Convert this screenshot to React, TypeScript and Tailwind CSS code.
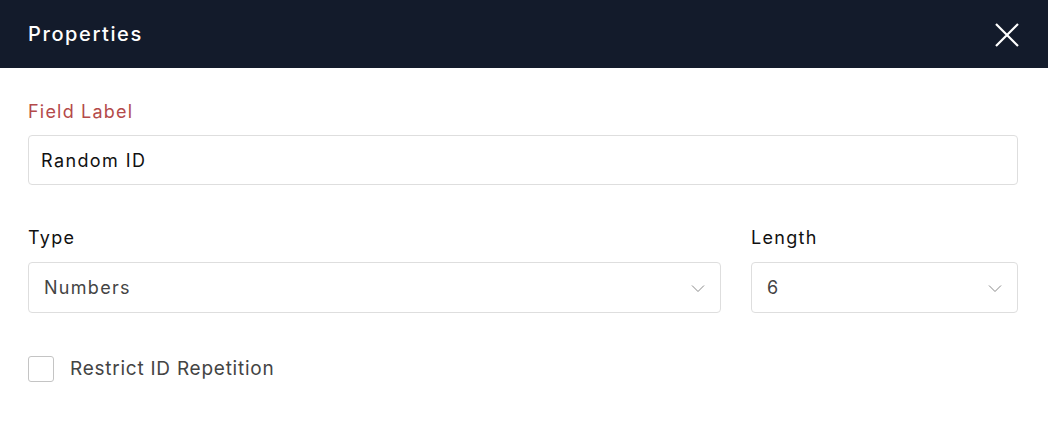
import React from 'react';

const Chevron: React.FC = () => (
  <svg width="16" height="16" viewBox="0 0 16 16" fill="none" className="text-[#8a8a8a]">
    <path d="M2 5.5l6 6 6-6" stroke="currentColor" strokeWidth="1" />
  </svg>
);

const App: React.FC = () => {
  return (
    <div className="w-[1048px] h-[440px] bg-white font-['Inter',sans-serif]">
      {/* Header */}
      <div className="h-[68px] bg-[#131b2b] flex items-center justify-between pl-[28px] pr-[28px]">
        <h2 className="text-[20px] font-medium text-white tracking-[1.6px]">Properties</h2>
        <button className="text-white mt-[2px]">
          <svg width="26" height="26" viewBox="0 0 26 26" fill="none">
            <path d="M2 2l22 22M24 2L2 24" stroke="currentColor" strokeWidth="2.2" />
          </svg>
        </button>
      </div>

      <div className="pl-[28px] pr-[30px] pt-[31px]">
        {/* Field label */}
        <label className="block text-[18px] leading-[26px] tracking-[1.2px] text-[#b44a4a] mb-[10px]">
          Field Label
        </label>
        <div className="h-[50px] border border-[#dedede] rounded-[4px] flex items-center px-[12px]">
          <span className="text-[18px] tracking-[1.4px] text-[#111]">Random ID</span>
        </div>

        {/* Type + Length */}
        <div className="flex gap-[30px] mt-[40px]">
          <div className="flex-1">
            <label className="block text-[18px] leading-[26px] tracking-[1.3px] text-[#111] mb-[11px]">Type</label>
            <div className="h-[51px] border border-[#dedede] rounded-[4px] flex items-center justify-between pl-[15px] pr-[14px]">
              <span className="text-[18px] tracking-[1.3px] text-[#444]">Numbers</span>
              <Chevron />
            </div>
          </div>
          <div className="w-[267px]">
            <label className="block text-[18px] leading-[26px] tracking-[1.3px] text-[#111] mb-[11px]">Length</label>
            <div className="h-[51px] border border-[#dedede] rounded-[4px] flex items-center justify-between pl-[15px] pr-[14px]">
              <span className="text-[18px] text-[#444]">6</span>
              <Chevron />
            </div>
          </div>
        </div>

        {/* Checkbox */}
        <label className="flex items-center gap-[16px] mt-[42px]">
          <span className="w-[26px] h-[26px] border border-[#c4c4c4] rounded-[3px] bg-white" />
          <span className="text-[19px] tracking-[0.75px] text-[#444]">Restrict ID Repetition</span>
        </label>
      </div>
    </div>
  );
};

export default App;
